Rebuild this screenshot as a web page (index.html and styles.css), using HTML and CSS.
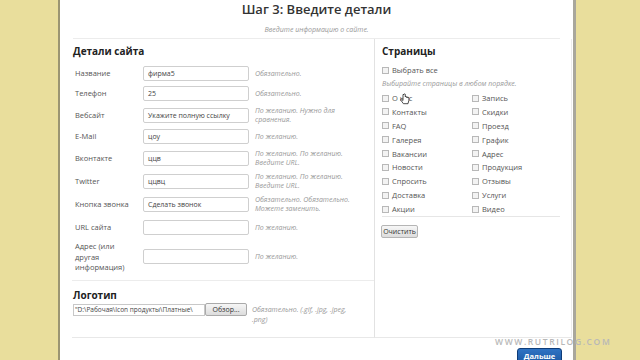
FILE: index.html
```html
<!DOCTYPE html>
<html lang="ru">
<head>
<meta charset="utf-8">
<title>Шаг 3</title>
<link rel="stylesheet" href="styles.css">
</head>
<body>
<div class="page">
  <h1 class="title">Шаг 3: Введите детали</h1>
  <p class="subtitle">Введите информацию о сайте.</p>
  <div class="rule"></div>
  <div class="panels">
    <div class="left">
      <section class="details">
        <h2 class="heading">Детали сайта</h2>
        <div class="form">
          <div class="row"><span class="label">Название</span><span class="input">фирма5</span><span class="hint">Обязательно.</span></div>
          <div class="row"><span class="label">Телефон</span><span class="input">25</span><span class="hint">Обязательно.</span></div>
          <div class="row"><span class="label">Вебсайт</span><span class="input">Укажите полную ссылку</span><span class="hint two">По желанию. Нужно для сравнения.</span></div>
          <div class="row"><span class="label">E-Mail</span><span class="input">цоу</span><span class="hint">По желанию.</span></div>
          <div class="row"><span class="label">Вконтакте</span><span class="input">ццв</span><span class="hint two">По желанию. По желанию. Введите URL.</span></div>
          <div class="row"><span class="label">Twitter</span><span class="input">ццвц</span><span class="hint two">По желанию. По желанию. Введите URL.</span></div>
          <div class="row"><span class="label">Кнопка звонка</span><span class="input">Сделать звонок</span><span class="hint two">Обязательно. Обязательно. Можете заменить.</span></div>
          <div class="row url"><span class="label">URL сайта</span><span class="input"></span><span class="hint">По желанию.</span></div>
          <div class="row addr"><span class="label multi">Адрес (или другая информация)</span><span class="input"></span><span class="hint">По желанию.</span></div>
        </div>
      </section>
      <section class="logo">
        <h2 class="heading">Логотип</h2>
        <div class="file-row">
          <span class="file-input">"D:\Рабочая\Icon продукты\Платные\</span>
          <span class="browse">Обзор...</span>
          <span class="hint">Обязательно. (.gif, .jpg, .jpeg, .png)</span>
        </div>
      </section>
    </div>
    <div class="right">
      <h2 class="heading">Страницы</h2>
      <div class="check all"><span class="cb"></span>Выбрать все</div>
      <p class="pages-hint">Выбирайте страницы в любом порядке.</p>
      <div class="grid">
        <div class="check"><span class="cb"></span>О нас</div>
        <div class="check"><span class="cb"></span>Запись</div>
        <div class="check"><span class="cb"></span>Контакты</div>
        <div class="check"><span class="cb"></span>Скидки</div>
        <div class="check"><span class="cb"></span>FAQ</div>
        <div class="check"><span class="cb"></span>Проезд</div>
        <div class="check"><span class="cb"></span>Галерея</div>
        <div class="check"><span class="cb"></span>График</div>
        <div class="check"><span class="cb"></span>Вакансии</div>
        <div class="check"><span class="cb"></span>Адрес</div>
        <div class="check"><span class="cb"></span>Новости</div>
        <div class="check"><span class="cb"></span>Продукция</div>
        <div class="check"><span class="cb"></span>Спросить</div>
        <div class="check"><span class="cb"></span>Отзывы</div>
        <div class="check"><span class="cb"></span>Доставка</div>
        <div class="check"><span class="cb"></span>Услуги</div>
        <div class="check"><span class="cb"></span>Акции</div>
        <div class="check"><span class="cb"></span>Видео</div>
      </div>
      <div class="sep"></div>
      <span class="clear">Очистить</span>
    </div>
  </div>
  <div class="footer">
    <span class="next">Дальше</span>
  </div>
  <span class="watermark">WWW.RUTRILOG.COM</span>
  <svg class="cursor" width="10" height="13" viewBox="0 0 10 13"><path d="M3 1.5 v6 l-1.3 -1.2 c-0.6 -0.5 -1.4 0.2 -0.9 0.8 l2.6 3.6 h4.6 l0.9 -3.4 v-2.3 c0 -0.8 -1.2 -0.8 -1.2 0 v-0.6 c0 -0.8 -1.2 -0.8 -1.2 0 v-0.4 c0 -0.8 -1.2 -0.8 -1.2 0 v-2.5 c0 -0.9 -1.3 -0.9 -1.3 0 z" fill="#fff" stroke="#222" stroke-width="0.8"/></svg>
</div>
</body>
</html>
```

FILE: styles.css
```css
* { box-sizing: border-box; }
html, body { margin: 0; padding: 0; }
body {
  background: #e9de9c;
  font-family: "Open Sans", "DejaVu Sans", sans-serif;
  color: #444;
  width: 640px;
  height: 360px;
  overflow: hidden;
}
.page {
  position: relative;
  margin-left: 58px;
  width: 518px;
  height: 360px;
  background: #fff;
  border-left: 2px solid #9b9572;
  border-right: 3px solid #a9a79c;
}
.title {
  margin: 0;
  font-size: 13px;
  line-height: 18px;
  font-weight: 600;
  color: #333;
  text-align: center;
}
.subtitle {
  margin: 7px 0 0;
  font-size: 7px;
  line-height: 10px;
  font-style: italic;
  color: #999;
  text-align: center;
}
.rule {
  margin: 3px 0 0 13px;
  width: 487px;
  height: 1px;
  background: #ececec;
}
.panels {
  display: flex;
  margin-left: 12px;
  height: 299px;
}
.left {
  width: 303px;
  display: flex;
  flex-direction: column;
  border-right: 1px solid #e2e2e2;
  border-bottom: 1px solid #e8e8e8;
}
.right {
  width: 197px;
  padding-left: 7px;
  border-right: 1px solid #ececec;
  border-bottom: 1px solid #e8e8e8;
}
.heading {
  margin: 0;
  padding-top: 5px;
  font-size: 10px;
  line-height: 14px;
  font-weight: 700;
  color: #222;
}
.details {
  height: 242px;
  padding-left: 1px;
  border-bottom: 1px solid #ececec;
}
.form {
  margin-top: 8px;
  padding-left: 2px;
  display: flex;
  flex-direction: column;
  gap: 5px;
}
.row {
  display: grid;
  grid-template-columns: 62px 106px 1fr;
  column-gap: 6px;
  align-items: center;
}
.row.url { margin-top: 2px; }
.row.addr { margin-top: 1px; }
.label {
  font-size: 7.5px;
  line-height: 10.5px;
  color: #555;
}
.label.multi { width: 50px; }
.input {
  height: 15px;
  border: 1px solid #cfcfcf;
  border-radius: 2px;
  font-size: 7px;
  line-height: 13px;
  padding-left: 4px;
  color: #444;
  white-space: nowrap;
  overflow: hidden;
}
.hint {
  font-size: 7px;
  line-height: 9px;
  font-style: italic;
  color: #999;
}
.hint.two { width: 110px; }
.logo { padding-left: 1px; flex: 1; }
.logo .heading { padding-top: 7px; }
.file-row {
  margin-top: 2px;
  display: flex;
  align-items: flex-start;
}
.file-input {
  width: 132px;
  height: 12px;
  border: 1px solid #c8c8c8;
  font-size: 6.5px;
  line-height: 10px;
  padding-left: 1px;
  white-space: nowrap;
  overflow: hidden;
  color: #444;
}
.browse {
  width: 42px;
  height: 13px;
  margin-top: -1px;
  border: 1px solid #aaa;
  border-radius: 2px;
  background: linear-gradient(#f6f6f6, #dcdcdc);
  font-size: 7px;
  line-height: 11px;
  text-align: center;
  color: #333;
}
.logo .hint {
  margin-left: 5px;
  width: 104px;
  line-height: 10px;
  margin-top: 1px;
}
.check {
  display: flex;
  align-items: center;
  font-size: 7.5px;
  line-height: 14px;
  height: 14px;
  color: #555;
}
.cb {
  display: inline-block;
  width: 7px;
  height: 7px;
  border: 1px solid #b8b8b8;
  background: #f3f3f3;
  margin-right: 3px;
}
.check.all { margin-top: 5px; }
.pages-hint {
  margin: 0;
  font-size: 7px;
  line-height: 14px;
  font-style: italic;
  color: #999;
}
.grid {
  display: grid;
  grid-template-columns: 90px 90px;
  grid-auto-rows: 13.9px;
}
.sep {
  width: 178px;
  height: 1px;
  background: #e6e6e6;
}
.clear {
  display: inline-block;
  margin-top: 3px;
  margin-left: -1px;
  width: 37px;
  height: 13px;
  border: 1px solid #b5b5b5;
  border-radius: 2px;
  background: linear-gradient(#f7f7f7, #dddddd);
  font-size: 7px;
  line-height: 11px;
  text-align: center;
  color: #333;
}
.footer {
  display: flex;
  justify-content: flex-end;
  padding-right: 11px;
  padding-top: 10px;
}
.next {
  width: 45px;
  height: 18px;
  border: 1px solid #0d3c78;
  border-radius: 3px;
  background: linear-gradient(#2f73c4, #1a569f);
  color: #fff;
  font-size: 7.5px;
  font-weight: 700;
  line-height: 14px;
  text-align: center;
}
.watermark {
  position: absolute;
  left: 435px;
  top: 336px;
  font-size: 8.5px;
  font-weight: 600;
  letter-spacing: 1.6px;
  color: #b8b8b8;
  white-space: nowrap;
}
.cursor {
  position: absolute;
  left: 340px;
  top: 93px;
}
```
